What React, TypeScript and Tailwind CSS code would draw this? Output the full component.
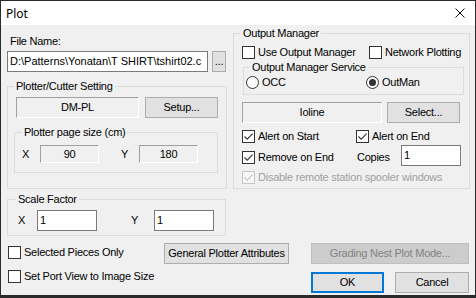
import type { ReactNode } from "react";

const ui = "font-['Liberation_Sans',Arial,sans-serif] text-[11px] leading-[13px] tracking-[-0.25px] text-black";

function Group({
  label,
  legendClass,
  className,
  children,
}: {
  label: string;
  legendClass: string;
  className: string;
  children: ReactNode;
}) {
  return (
    <fieldset className={`border border-[#dcdcdc] ${className}`}>
      <legend className={`px-[2px] leading-[13px] ${legendClass}`}>{label}</legend>
      {children}
    </fieldset>
  );
}

function Check({
  label,
  checked = false,
  disabled = false,
  className = "",
}: {
  label: string;
  checked?: boolean;
  disabled?: boolean;
  className?: string;
}) {
  const stroke = disabled ? "#c5c5c5" : "#333333";
  return (
    <div className={`flex h-[13px] items-center whitespace-nowrap ${className}`}>
      <span
        className={`flex h-[13px] w-[13px] shrink-0 items-center justify-center border ${
          disabled ? "border-[#c5c5c5] bg-[#f7f7f7]" : "border-[#333333] bg-white"
        }`}
      >
        {checked ? (
          <svg width="11" height="11" viewBox="0 0 11 11">
            <path d="M1.5 5.5 L4.2 8.2 L9.6 2.6" fill="none" stroke={stroke} strokeWidth="1.1" />
          </svg>
        ) : null}
      </span>
      <span className={`ml-[3px] ${disabled ? "text-[#a0a0a0]" : ""}`}>{label}</span>
    </div>
  );
}

function Radio({ label, checked = false, className = "" }: { label: string; checked?: boolean; className?: string }) {
  return (
    <div className={`flex h-[13px] items-center ${className}`}>
      <span className="flex h-[13px] w-[13px] shrink-0 items-center justify-center rounded-full border border-[#333333] bg-white">
        {checked ? <span className="h-[7px] w-[7px] rounded-full bg-[#333333]" /> : null}
      </span>
      <span className="ml-[3px]">{label}</span>
    </div>
  );
}

function Button({ children, className = "" }: { children: ReactNode; className?: string }) {
  return (
    <div className={`flex h-[21px] items-center justify-center border border-[#adadad] bg-[#e1e1e1] ${className}`}>
      {children}
    </div>
  );
}

function Sunken({ children, className = "" }: { children: ReactNode; className?: string }) {
  return (
    <div
      className={`flex items-center justify-center border border-t-[#a0a0a0] border-l-[#a0a0a0] border-r-white border-b-white bg-[#f0f0f0] ${className}`}
    >
      {children}
    </div>
  );
}

function TextBox({ value, className = "" }: { value: string; className?: string }) {
  return (
    <div className={`flex h-[21px] items-center overflow-hidden whitespace-nowrap border border-[#7a7a7a] bg-white pl-[2px] ${className}`}>
      {value}
    </div>
  );
}

export default function App() {
  return (
    <div className={`flex h-[298px] w-[476px] flex-col bg-[#2a2a2a] px-px pt-px pb-[3px] ${ui}`}>
      {/* title bar */}
      <div className="flex h-[24px] shrink-0 items-center justify-between bg-white pl-[5px] pr-[10px]">
        <span className="font-['Noto_Sans',sans-serif] text-[12px] tracking-normal text-black">Plot</span>
        <svg width="10" height="10" viewBox="0 0 10 10">
          <path d="M0.5 0.5 L9.5 9.5 M9.5 0.5 L0.5 9.5" stroke="#111" strokeWidth="1" />
        </svg>
      </div>

      <div className="flex-1 bg-[#f0f0f0] pl-[6px] pr-[5px]">
        <div className="flex items-start">
          {/* left column */}
          <div className="flex w-[220px] flex-col pt-[10px]">
            <div className="ml-[3px]">File Name:</div>
            <div className="mt-[3px] flex">
              <TextBox value={"D:\\Patterns\\Yonatan\\T SHIRT\\tshirt02.c"} className="w-[201px] tracking-normal" />
              <Button className="ml-[4px] w-[14px]">...</Button>
            </div>

            <Group label="Plotter/Cutter Setting" legendClass="ml-[6px]" className="mt-[8px] h-[109px] w-[220px]">
              <div className="pl-[6px]">
                <div className="mt-[4px] ml-[2px] flex">
                  <Sunken className="h-[21px] w-[123px]">DM-PL</Sunken>
                  <Button className="ml-[6px] w-[73px]">Setup...</Button>
                </div>
                <Group label="Plotter page size (cm)" legendClass="ml-[7px]" className="mt-[8px] h-[47px] w-[204px]">
                  <div className="mt-[6px] flex items-center pl-[7px]">
                    <span className="w-[18px]">X</span>
                    <Sunken className="h-[18px] w-[59px]">90</Sunken>
                    <span className="ml-[22px] w-[18px]">Y</span>
                    <Sunken className="h-[18px] w-[59px]">180</Sunken>
                  </div>
                </Group>
              </div>
            </Group>

            <Group label="Scale Factor" legendClass="ml-[8px]" className="mt-[4px] h-[43px] w-[219px]">
              <div className="mt-[4px] flex items-center pl-[10px]">
                <span className="w-[19px]">X</span>
                <TextBox value="1" className="w-[60px]" />
                <span className="ml-[34px] w-[23px]">Y</span>
                <TextBox value="1" className="w-[60px]" />
              </div>
            </Group>
          </div>

          {/* right column */}
          <Group label="Output Manager" legendClass="ml-[7px]" className="mt-[2px] ml-[6px] h-[162px] w-[237px]">
            <div className="pl-[8px]">
              <div className="mt-[6px] flex">
                <Check label="Use Output Manager" className="w-[127px]" />
                <Check label="Network Plotting" />
              </div>

              <Group label="Output Manager Service" legendClass="ml-[6px]" className="mt-[2px] ml-px h-[34px] w-[221px]">
                <div className="mt-[2px] flex pl-[2px]">
                  <Radio label="OCC" className="w-[120px]" />
                  <Radio label="OutMan" checked />
                </div>
              </Group>

              <div className="mt-[7px] flex">
                <Sunken className="h-[21px] w-[140px]">Ioline</Sunken>
                <Button className="ml-[5px] w-[73px]">Select...</Button>
              </div>

              <div className="mt-[7px] flex">
                <Check label="Alert on Start" checked className="w-[114px]" />
                <Check label="Alert on End" checked />
              </div>

              <div className="mt-[2px] flex h-[21px] items-start">
                <Check label="Remove on End" checked className="mt-[6px] w-[115px]" />
                <span className="mt-[6px] w-[44px]">Copies</span>
                <TextBox value="1" className="w-[60px]" />
              </div>

              <Check label="Disable remote station spooler windows" checked disabled className="mt-[5px]" />
            </div>
          </Group>
        </div>

        {/* bottom rows */}
        <div className="mt-[7px] flex items-start">
          <div className="w-[157px] pt-[3px]">
            <Check label="Selected Pieces Only" className="ml-px" />
          </div>
          <Button className="w-[125px]">General Plotter Attributes</Button>
          <div className="ml-[22px] flex h-[21px] w-[158px] items-center justify-center border border-[#bfbfbf] bg-[#cccccc] text-[#838383]">
            Grading Nest Plot Mode...
          </div>
        </div>

        <div className="mt-[6px] flex items-start">
          <div className="w-[304px]">
            <Check label="Set Port View to Image Size" className="ml-px" />
          </div>
          <div className="mt-[2px] flex h-[21px] w-[73px] items-center justify-center border-2 border-[#0078d7] bg-[#e1e1e1]">
            OK
          </div>
          <Button className="mt-[2px] ml-[11px] w-[74px]">Cancel</Button>
        </div>
      </div>
    </div>
  );
}
